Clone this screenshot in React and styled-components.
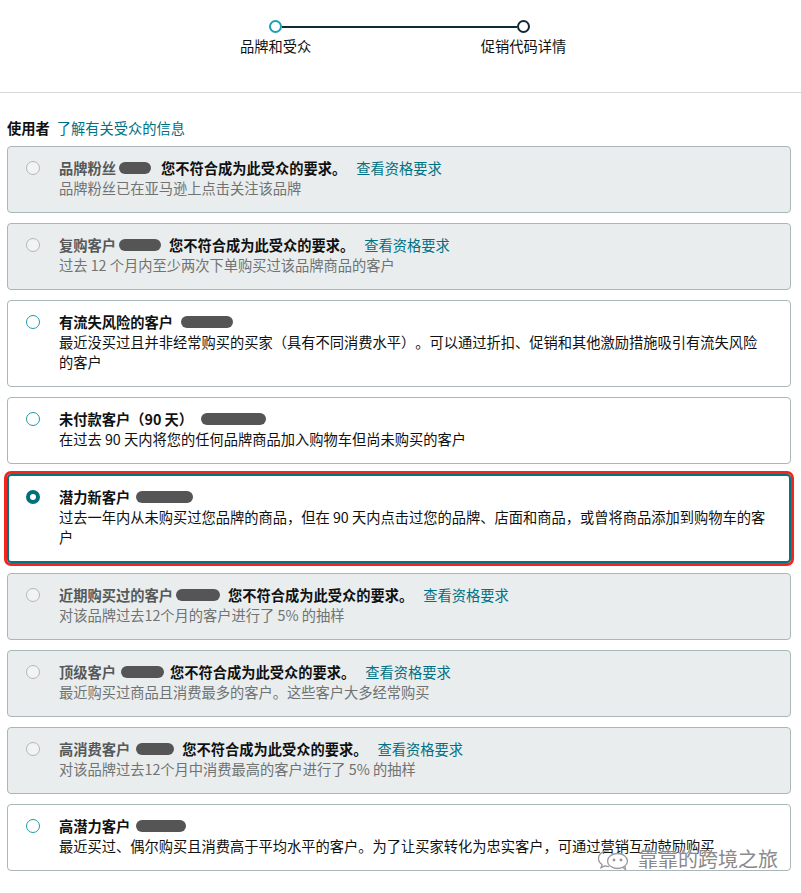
import React from 'react';
import styled, { createGlobalStyle, css } from 'styled-components';

const GlobalStyle = createGlobalStyle`
    body {
        margin: 0;
        background: #ffffff;
        font-family: "Noto Sans CJK SC", "Noto Sans", sans-serif;
        color: #0f1111;
        text-spacing-trim: space-all;
    }
`;

const Page = styled.div`
    position: relative;
    width: 801px;
    font-size: 14.25px;
    line-height: 20px;
`;

const Stepper = styled.div`
    height: 93px;
    border-bottom: 1px solid #d5d9d9;
    display: flex;
    justify-content: center;
    padding-top: 20px;
    box-sizing: border-box;
`;

const StepRow = styled.div`
    display: grid;
    grid-template-columns: 13px 235px 13px;
    grid-template-rows: 13px 20px;
    row-gap: 3px;
    margin-left: -2px;
`;

const Dot = styled.div`
    width: 13px;
    height: 13px;
    box-sizing: border-box;
    border-radius: 50%;
    border: 2px solid ${p => (p.$active ? '#1a9fb3' : '#0f2b33')};
    background: #fff;
`;

const Line = styled.div`
    align-self: center;
    height: 2px;
    background: #0f2b33;
`;

const StepLabel = styled.div`
    grid-column: ${p => p.$col};
    width: 13px;
    display: flex;
    justify-content: center;
    white-space: nowrap;
    color: #0f1111;
`;

const Content = styled.div`
    padding: 25px 10px 0 7px;
`;

const Heading = styled.div`
    display: flex;
    gap: 7px;
    margin-bottom: 8px;
`;

const HeadingTitle = styled.span`
    font-weight: 700;
`;

const Link = styled.a`
    color: #007185;
    text-decoration: none;
    margin-left: ${p => p.$gap || 0}px;
`;

const CardList = styled.div`
    display: flex;
    flex-direction: column;
    gap: 10px;
`;

const Card = styled.div`
    display: flex;
    gap: 19px;
    padding: 11px 21px 14px 18px;
    border: 1px solid #aab7b8;
    border-radius: 4px;
    background: ${p => (p.$disabled ? '#eaeded' : '#ffffff')};
    ${p => p.$selected && css`
        border: 2px solid #00747f;
        padding: 11px 20px 14px 17px;
        outline: 3px solid #f2261f;
        outline-offset: 0;
    `}
`;

const Radio = styled.span`
    flex: none;
    width: 14px;
    height: 14px;
    margin-top: 3px;
    box-sizing: border-box;
    border-radius: 50%;
    border: 1.5px solid ${p => (p.$disabled ? '#b3b8b8' : '#2497a9')};
    background: ${p => (p.$disabled ? '#f2f3f3' : '#fff')};
    ${p => p.$checked && css`
        border: 4px solid #00707a;
        background: #fff;
    `}
`;

const Body = styled.div`
    flex: 1;
    min-width: 0;
`;

const TitleRow = styled.div`
    display: flex;
    align-items: center;
    white-space: nowrap;
`;

const Name = styled.span`
    font-weight: 700;
    color: ${p => (p.$disabled ? '#565959' : '#0f1111')};
`;

const Redacted = styled.span`
    display: inline-block;
    width: ${p => p.$w}px;
    height: 12px;
    margin: 0 ${p => p.$after}px 0 ${p => p.$before}px;
    border-radius: 6px;
    background: #555555;
`;

const Warning = styled.span`
    font-weight: 700;
    color: #0f1111;
`;

const Desc = styled.div`
    color: ${p => (p.$disabled ? '#6f7373' : '#0f1111')};
`;

const Watermark = styled.div`
    position: absolute;
    left: 596px;
    top: 845px;
    display: flex;
    align-items: center;
    gap: 8px;
    font-size: 20px;
    line-height: 28px;
    color: #8a8a8a;
    text-shadow: 0 0 2px #fff, 0 0 2px #fff;
    pointer-events: none;
`;

const audiences = [
    { name: '品牌粉丝', blob: [32, 3, 10], disabled: true, link: 10, desc: '品牌粉丝已在亚马逊上点击关注该品牌' },
    { name: '复购客户', blob: [42, 3, 8], disabled: true, link: 10, desc: '过去 12 个月内至少两次下单购买过该品牌商品的客户' },
    { name: '有流失风险的客户', blob: [52, 8, 0], desc: '最近没买过且并非经常购买的买家（具有不同消费水平）。可以通过折扣、促销和其他激励措施吸引有流失风险的客户' },
    { name: '未付款客户（90 天）', blob: [65, 8, 0], desc: '在过去 90 天内将您的任何品牌商品加入购物车但尚未购买的客户' },
    { name: '潜力新客户', blob: [57, 6, 0], selected: true, desc: '过去一年内从未购买过您品牌的商品，但在 90 天内点击过您的品牌、店面和商品，或曾将商品添加到购物车的客户' },
    { name: '近期购买过的客户', blob: [44, 3, 8], disabled: true, link: 10, desc: '对该品牌过去12个月的客户进行了 5% 的抽样' },
    { name: '顶级客户', blob: [43, 5, 6], disabled: true, link: 10, desc: '最近购买过商品且消费最多的客户。这些客户大多经常购买' },
    { name: '高消费客户', blob: [38, 6, 8], disabled: true, link: 10, desc: '对该品牌过去12个月中消费最高的客户进行了 5% 的抽样' },
    { name: '高潜力客户', blob: [50, 6, 0], desc: '最近买过、偶尔购买且消费高于平均水平的客户。为了让买家转化为忠实客户，可通过营销互动鼓励购买' },
];

const WeChatIcon = () => (
    <svg width="34" height="22" viewBox="0 0 34 22" fill="none" stroke="#9a9a9a" strokeWidth="1.3">
        <path d="M13 2.5c-5.8 0-10.5 3.6-10.5 8 0 2.4 1.4 4.6 3.6 6L5 19.8l3.9-2c1.3.4 2.6.7 4.1.7" />
        <ellipse cx="21.5" cy="13" rx="10" ry="7.5" fill="#fff" />
        <path d="M27 19.5l2.5 2-0.5-3.4" />
        <circle cx="18" cy="12" r="0.8" fill="#9a9a9a" />
        <circle cx="25" cy="12" r="0.8" fill="#9a9a9a" />
    </svg>
);

const AudienceCard = ({ item }) => {
    const [w, before, after] = item.blob;
    return (
        <Card $disabled={item.disabled} $selected={item.selected}>
            <Radio $disabled={item.disabled} $checked={item.selected} />
            <Body>
                <TitleRow>
                    <Name $disabled={item.disabled}>{item.name}</Name>
                    <Redacted $w={w} $before={before} $after={after} />
                    {item.disabled && <Warning>您不符合成为此受众的要求。</Warning>}
                    {item.disabled && <Link $gap={item.link} href="#">查看资格要求</Link>}
                </TitleRow>
                <Desc $disabled={item.disabled}>{item.desc}</Desc>
            </Body>
        </Card>
    );
};

export default function App() {
    return (
        <Page>
            <GlobalStyle />
            <Stepper>
                <StepRow>
                    <Dot $active />
                    <Line />
                    <Dot />
                    <StepLabel $col={1}>品牌和受众</StepLabel>
                    <StepLabel $col={3}>促销代码详情</StepLabel>
                </StepRow>
            </Stepper>
            <Content>
                <Heading>
                    <HeadingTitle>使用者</HeadingTitle>
                    <Link href="#">了解有关受众的信息</Link>
                </Heading>
                <CardList>
                    {audiences.map(item => (
                        <AudienceCard key={item.name} item={item} />
                    ))}
                </CardList>
            </Content>
            <Watermark>
                <WeChatIcon />
                <span>靠靠的跨境之旅</span>
            </Watermark>
        </Page>
    );
}
